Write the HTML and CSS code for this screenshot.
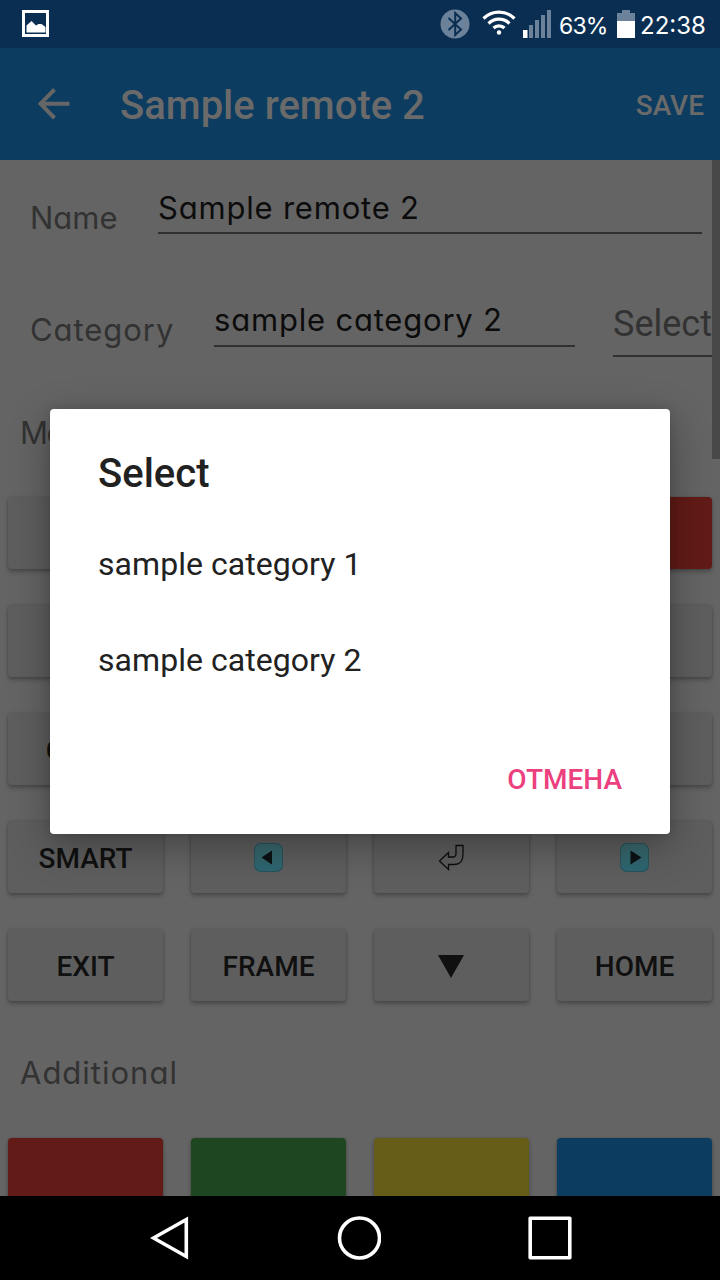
FILE: index.html
```html
<!DOCTYPE html>
<html lang="en">
<head>
<meta charset="utf-8">
<title>Sample remote 2</title>
<link rel="stylesheet" href="styles.css">
</head>
<body>
<div class="screen">
  <header class="status">
    <svg class="status-picture" width="28" height="28" viewBox="0 0 28 28"><path d="M1.500 1.500h24v24h-24z" fill="none" stroke="#fff" stroke-width="3"/><path d="M4.500 22.500v-7l5-4.500 4.500 4.500 2.500-1.500h3l4 3v5.500z" fill="#fff"/></svg>
    <div class="status-right">
      <svg width="30" height="30" viewBox="0 0 30 30"><circle cx="15" cy="15" r="14.500" fill="#6c829a"/><path d="M8.500 9 21 20.500 15.200 26V4L21 9.500 8.500 21" fill="none" stroke="#0a2e51" stroke-width="2"/></svg>
      <svg class="wifi" width="34" height="26" viewBox="0 0 34 26"><g fill="none" stroke="#fff" stroke-width="3.200"><path d="M1.500 8.500a22 22 0 0 1 31 0"/><path d="M6.500 13.500a15 15 0 0 1 21 0"/><path d="M11.500 18a8 8 0 0 1 11 0"/></g><circle cx="17" cy="22.500" r="2.200" fill="#fff"/></svg>
      <svg class="signal" width="29" height="28" viewBox="0 0 29 28"><path fill="#fff" d="M0 20h4.500v8H0z"/><path fill="#6c829a" d="M6 15h4v13H6zM12 10h4v18h-4zM18 5h4v23h-4zM24 0h4v28h-4z"/></svg>
      <span class="percent">63%</span>
      <svg class="battery" width="18" height="28" viewBox="0 0 18 28"><path fill="#6c829a" d="M5 0h8v3h5v8H0V3h5z"/><path fill="#fff" d="M0 11h18v17H0z"/></svg>
      <span class="clock">22:38</span>
    </div>
  </header>
  <div class="toolbar">
    <svg class="back" width="32" height="32" viewBox="0 0 32 32"><path d="M31.500 15.700H3M16.500 1.500 2.500 15.700l14 14.300" fill="none" stroke="#666" stroke-width="4"/></svg>
    <h1 class="title">Sample remote 2</h1>
    <span class="save">SAVE</span>
  </div>
  <main class="content">
    <div class="form">
      <div class="row row-name">
        <span class="label">Name</span>
        <span class="field field-name">Sample remote 2</span>
      </div>
      <div class="row row-category">
        <span class="label">Category</span>
        <span class="field field-category">sample category 2</span>
        <span class="spinner">Select</span>
      </div>
    </div>
    <h2 class="section">Main</h2>
    <div class="grid">
      <div class="key"></div><div class="key"></div><div class="key"></div><div class="key red"></div>
      <div class="key"></div><div class="key"></div><div class="key"></div><div class="key"></div>
      <div class="key"><span class="caption">GUIDE</span></div><div class="key"></div><div class="key"></div><div class="key"></div>
      <div class="key"><span class="caption">SMART</span></div>
      <div class="key"><span class="tile"><svg width="29" height="29" viewBox="0 0 29 29"><path fill="#0c1214" d="M18 7.500v14L7.500 14.500z"/></svg></span></div>
      <div class="key"><svg class="enter" width="28" height="28" viewBox="0 0 28 28"><path d="M18 1.500h7v9c0 6-3 10-9 10h-5.500v5L1.500 17l9-8.500v4.500H15c2.500 0 3-1 3-3.500z" fill="none" stroke="#0d0d0d" stroke-width="1.300"/></svg></div>
      <div class="key"><span class="tile"><svg width="29" height="29" viewBox="0 0 29 29"><path fill="#0c1214" d="M10.500 7.500v14L21.500 14.500z"/></svg></span></div>
      <div class="key"><span class="caption">EXIT</span></div>
      <div class="key"><span class="caption">FRAME</span></div>
      <div class="key"><svg class="down" width="26" height="24" viewBox="0 0 26 24"><path fill="#101010" d="M0 1h26L13 24z"/></svg></div>
      <div class="key"><span class="caption">HOME</span></div>
    </div>
    <h2 class="section section-more">Additional</h2>
    <div class="grid">
      <div class="key red"></div><div class="key green"></div><div class="key yellow"></div><div class="key blue"></div>
    </div>
    <div class="scrollbar"></div>
  </main>
  <nav class="nav">
    <svg width="40" height="44" viewBox="0 0 40 44"><path d="M36.300 3.500v37L3.500 22z" fill="none" stroke="#fff" stroke-width="3.600"/></svg>
    <svg width="44" height="44" viewBox="0 0 44 44"><circle cx="22.500" cy="22" r="20" fill="none" stroke="#fff" stroke-width="3.600"/></svg>
    <svg width="44" height="44" viewBox="0 0 44 44"><path d="M2.200 2.200h39.600v39.600H2.200z" fill="none" stroke="#fff" stroke-width="3.600" stroke-linejoin="round"/></svg>
  </nav>
  <div class="dialog">
    <h2 class="dialog-title">Select</h2>
    <div class="option">sample category 1</div>
    <div class="option">sample category 2</div>
    <div class="actions"><span class="cancel">ОТМЕНА</span></div>
  </div>
</div>
</body>
</html>
```
FILE: styles.css
```css
* { box-sizing: border-box; }
body { margin: 0; font-family: Roboto, "Liberation Sans", sans-serif; }
h1, h2 { margin: 0; font-weight: 500; }
svg { display: block; flex: none; }
.screen { position: relative; width: 720px; height: 1280px; overflow: hidden; display: flex; flex-direction: column; background: #646464; }

.status { height: 48px; flex: none; display: flex; align-items: center; justify-content: space-between; padding: 0 15px 0 22px; background: #0a2e51; color: #fff; font: 24px/44px Inter, sans-serif; }
.status-right { display: flex; align-items: center; }
.wifi { margin-left: 12px; margin-bottom: 3px; }
.signal { margin-left: 7px; }
.percent { width: 47px; margin-left: 7px; padding-top: 4px; font-size: 23px; letter-spacing: -0.8px; white-space: nowrap; }
.battery { margin-left: 11px; }
.clock { width: 65px; margin-left: 5px; padding-top: 4px; white-space: nowrap; }

.toolbar { height: 112px; flex: none; display: flex; align-items: center; padding: 0 16px 0 38px; background: #0d3c61; color: #6a6a6a; }
.title { margin-left: 50px; padding-top: 4px; font-size: 40px; line-height: 48px; }
.save { margin-left: auto; padding-top: 4px; font-size: 28px; line-height: 36px; font-weight: 500; }

.content { position: relative; flex: 1; min-height: 0; overflow: hidden; }
.form { height: 232px; padding: 26px 0 0 30px; }
.row { display: flex; align-items: flex-start; height: 113px; color: #323232; font: 31px/44px Inter, sans-serif; font-feature-settings: "cv11"; white-space: nowrap; }
.label { padding-top: 10px; }
.row-name .label { width: 128px; }
.row-category .label { width: 184px; padding-top: 9px; letter-spacing: 0.95px; }
.field { height: 48px; border-bottom: 2px solid #303030; color: #0c0c0c; letter-spacing: 0.8px; }
.field-name { width: 544px; }
.field-category { width: 361px; line-height: 42px; }
.spinner { width: 99px; height: 58px; margin-left: 38px; padding-top: 3px; border-bottom: 2px solid #303030; overflow: hidden; font-family: Roboto, sans-serif; font-size: 36px; }
.section { height: 105px; padding: 19px 20px 0; color: #323232; font: 400 31px/44px Inter, sans-serif; font-feature-settings: "cv11"; letter-spacing: -1.5px; }
.section-more { height: 137px; padding-top: 50px; letter-spacing: 1px; }
.grid { display: grid; grid-template-columns: repeat(4, 155px); grid-auto-rows: 72px; gap: 36px 28px; padding: 0 8px; }
.key { display: flex; align-items: center; justify-content: center; border-radius: 4px; background: #5e5e5e; color: #101010; font-size: 28px; line-height: 36px; font-weight: 500; box-shadow: 0 3px 4px rgba(0, 0, 0, .24), 0 0 3px rgba(0, 0, 0, .16); }
.caption { padding-top: 4px; }
.enter { margin: 2px 0 0; }
.down { margin: 2px 2px 0 0; }
.red { background: #621b16; }
.green { background: #1e4620; }
.yellow { background: #665e18; }
.blue { background: #0d3c61; }
.tile { width: 29px; height: 29px; margin-top: 1px; border-radius: 7px; background: linear-gradient(#3a686d, #2c6672); box-shadow: inset 0 0 0 1px #2a525a; }
.scrollbar { position: absolute; top: 0; right: 0; width: 8px; height: 299px; background: #484848; }

.nav { height: 84px; flex: none; display: flex; align-items: center; justify-content: space-between; padding: 0 148px 0 150px; background: #000; }

.dialog { position: absolute; left: 50px; top: 409px; width: 620px; height: 425px; padding: 41px 48px 0; border-radius: 4px; background: #fff; color: #212121; box-shadow: 0 12px 42px rgba(0, 0, 0, .32), 0 0 10px rgba(0, 0, 0, .12); }
.dialog-title { height: 66px; font-size: 40px; line-height: 48px; }
.option { height: 96px; font-size: 32px; line-height: 96px; letter-spacing: 0.05px; }
.actions { display: flex; justify-content: flex-end; padding-top: 54px; }
.cancel { color: #ec407f; font-size: 28px; line-height: 36px; font-weight: 500; }
```
